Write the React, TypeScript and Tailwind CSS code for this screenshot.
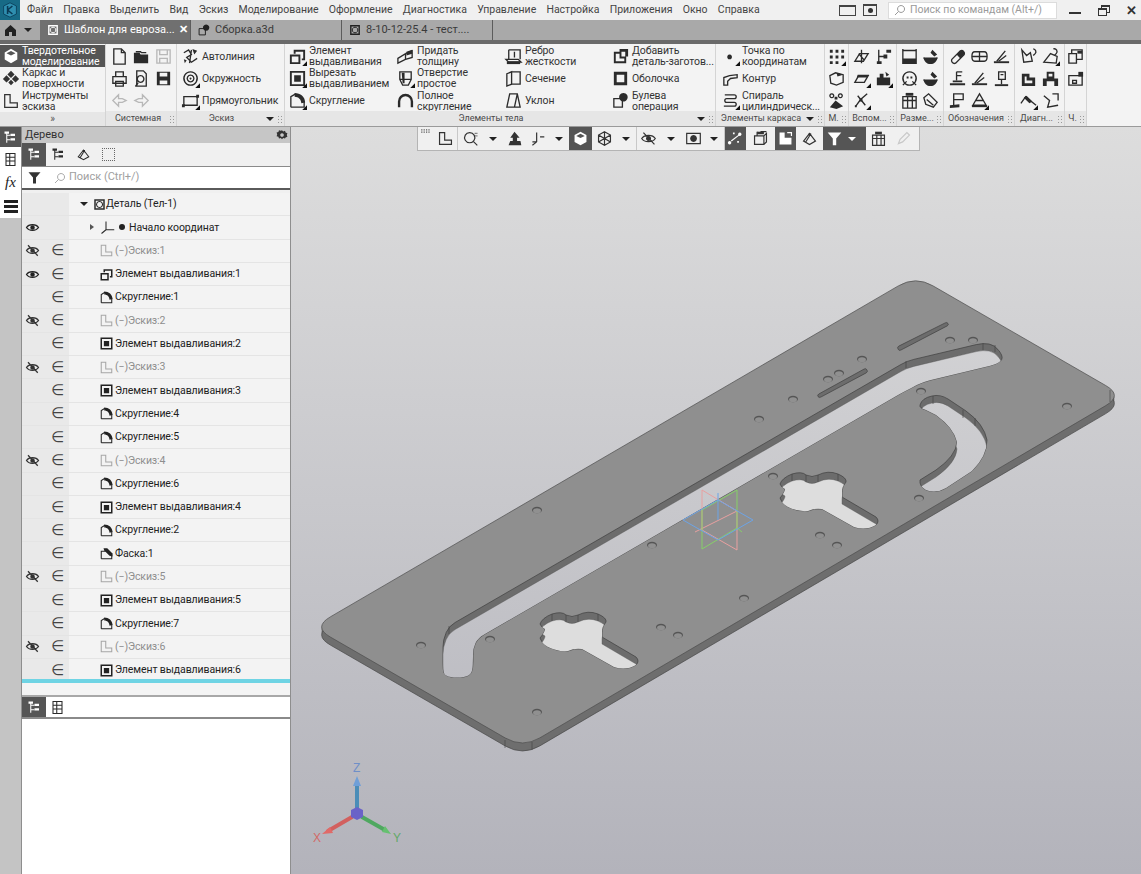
import React from 'react';

type P = [number, number];

// line-and-curve outline with softened corners, used for the plate and long slots
const rounded = (pts: P[], r: number) => {
  const n = pts.length;
  let d = '';
  pts.forEach((p, i) => {
    const a = pts[(i - 1 + n) % n];
    const b = pts[(i + 1) % n];
    const la = Math.hypot(a[0] - p[0], a[1] - p[1]);
    const lb = Math.hypot(b[0] - p[0], b[1] - p[1]);
    const ra = Math.min(r, la / 2) / la;
    const rb = Math.min(r, lb / 2) / lb;
    const s: P = [p[0] + (a[0] - p[0]) * ra, p[1] + (a[1] - p[1]) * ra];
    const e: P = [p[0] + (b[0] - p[0]) * rb, p[1] + (b[1] - p[1]) * rb];
    d += `${i === 0 ? 'M' : 'L'}${s[0].toFixed(1)} ${s[1].toFixed(1)}Q${p[0]} ${p[1]} ${e[0].toFixed(1)} ${e[1].toFixed(1)}`;
  });
  return d + 'Z';
};

const plate = rounded([[313, 627], [915.6, 275.8], [1123, 395.5], [522.6, 748]], 20);

const key = 'M0 2Q2-4 12-8Q22-11 26-7Q32-4 38-7Q48-12 58-8Q67-4 66 0Q62 4 62 10L62 15L96 35Q100 39 96 43Q86 49 74 45L42 27Q34 26 28 29Q18 30 8 25Q1 21 0 16Q5 10 5 7Q1 5 0 2Z';

const holes: { d: string; t?: string }[] = [
  { d: rounded([[443, 640], [449, 626], [907, 361], [983, 343], [995, 345], [1004, 358], [997, 364], [923, 382], [905, 391], [478, 638], [473, 648], [473, 668], [470, 676], [457, 678], [445, 676], [443, 670]], 7) },
  { d: key, t: 'translate(540 622)' },
  { d: key, t: 'translate(780 482)' },
  { d: 'M920 405Q922 398 932 396Q940 394 948 399L966 411Q984 424 987 440Q987 456 972 471L946 488Q936 494 926 490Q919 486 920 480L936 470Q956 456 957 442Q954 428 936 415L926 410Q919 408 920 405Z' },
  { d: rounded([[897, 347], [947, 322], [949, 325], [899, 351]], 2) },
  { d: rounded([[817, 395], [866, 368], [868, 372], [819, 398]], 2) },
];

const dots: P[] = [[950, 340], [973, 340], [862, 359], [828, 379], [839, 373], [793, 399], [759, 419], [921, 391], [1067, 406], [773, 476], [919, 498], [820, 535], [837, 545], [652, 545], [421, 645], [490, 639], [537, 712], [661, 627], [678, 635], [744, 598], [537, 510]];

const Scene = () => (
  <svg className="block w-[850px] h-[747px]" viewBox="291 127 850 747">
    <defs>
      <linearGradient id="bgg" gradientUnits="userSpaceOnUse" x1="0" y1="127" x2="0" y2="874">
        <stop offset="0" stopColor="#dddddd" />
        <stop offset="1" stopColor="#b3b3bb" />
      </linearGradient>
      {holes.map((h, i) => (
        <clipPath id={`hc${i}`} key={i}><path d={h.d} transform={h.t} /></clipPath>
      ))}
    </defs>
    {[2, 4, 6, 8].map((y) => (
      <path key={y} d={plate} transform={`translate(0 ${y})`} fill="#6e6e6e" />
    ))}
    <path d={plate} transform="translate(0 8)" fill="none" stroke="#484848" strokeWidth="0.7" />
    <path d={plate} fill="#8f8f8f" stroke="#4c4c4c" strokeWidth="0.7" />
    {holes.map((h, i) => (
      <g key={i}>
        <path d={h.d} transform={h.t} fill="#6c6c6c" stroke="#3f3f3f" strokeWidth="0.7" />
        <g clipPath={`url(#hc${i})`}>
          <g transform="translate(0 7)">
            <path d={h.d} transform={h.t} fill="url(#bgg)" stroke="#555" strokeWidth="0.4" />
          </g>
        </g>
      </g>
    ))}
    <g stroke="#3f3f3f" strokeWidth="0.6">
      <path d="M906 361v7M983 343v7M995 345v7M449 626v8M552 614v7M566 615v7M578 615v7M598 614v7M792 474v7M806 475v7M818 475v7M838 474v7M933 396v8M963 410v8M975 418v8" />
      <path d="M505 740v8M532 742v8M1110 390v12" />
    </g>
    {dots.map(([x, y], i) => (
      <g key={i}>
        <ellipse cx={x} cy={y} rx="5" ry="3.3" fill="#555" />
        <ellipse cx={x} cy={y + 0.8} rx="4" ry="2.5" fill="#909090" />
      </g>
    ))}
    <g fill="none" strokeWidth="1">
      <path d="M702 490L737 511V550L702 530ZM695 532L737 511" stroke="#e8a0a0" />
      <path d="M737 490L702 510V549L737 528ZM737 528L742 532" stroke="#86d068" />
      <path d="M683 520L718 500L753 520L718 540ZM718 493V520" stroke="#6da4e6" />
    </g>
    <g strokeLinecap="round">
      <path d="M357 812V785" stroke="#4b8db8" strokeWidth="4" />
      <path d="M357 776l-4 10h8z" fill="#6f9fd8" />
      <path d="M352 817L328 831" stroke="#d2605f" strokeWidth="4" />
      <path d="M322 834l8-7 3 6z" fill="#e06a68" />
      <path d="M362 817L385 830" stroke="#4fa860" strokeWidth="4" />
      <path d="M391 834l-9-2 3-6z" fill="#66c070" />
      <path d="M351 810l6-3 6 3v7l-6 3-6-3z" fill="#6a62c8" />
    </g>
    <g fontFamily="'Liberation Sans',sans-serif" fontSize="12">
      <text x="353" y="772" fill="#6f8fc8">Z</text>
      <text x="313" y="842" fill="#d26a68">X</text>
      <text x="393" y="842" fill="#62a868">Y</text>
    </g>
  </svg>
);

const G: Record<string, { s?: string; f?: string }> = {
  doc: { s: 'M4 2h8l4 4v12H4zM12 2v4h4' },
  folder: { f: 'M2 6h6l1 2h8v9H2z', s: 'M4 5h5l1 1h5' },
  saveg: { s: 'M3 3h14v14H3zM6 3v5h8V3M6 17v-5h8v5' },
  print: { s: 'M3 8h14v7H3zM6 8V3h8v5M6 13h8v5H6z' },
  preview: { s: 'M5 2h7l3 3v13H5zM9 7a3.5 3.5 0 1 0 .1 0z', f: 'M6 14l-3 4 1 1 3-4z' },
  save: { f: 'M3 3h14v14H3zM6 4v4h8V4zM6 12v4h8v-4z' },
  undo: { s: 'M9 4L3 10l6 6v-4h4l4-2-4-2H9z' },
  redo: { s: 'M11 4l6 6-6 6v-4H7l-4-2 4-2h4z' },
  auto: { s: 'M3 6l5-3 3 5-5 3 5 5 6-4M11 3l-2 14', f: 'M12 2l5 2-3 4zM3 13l3 1-2 3z' },
  circle: { s: 'M10 3a7 7 0 1 0 .1 0zM10 6.5a3.5 3.5 0 1 0 .1 0z', f: 'M10 9a1 1 0 1 0 .1 0z' },
  rect: { s: 'M3 6h14v9H3z', f: 'M1 14h3v3H1zM16 4h3v3h-3z' },
  extrude: { f: 'M2 8h11v10H2zM4 10v6h7v-6zM6 3h12v11h-3.5v-2H16V5H8v2H6z' },
  cut: { f: 'M2 2h16v16H2zM4 4v12h12V4zM6.5 6.5h7v7h-7z' },
  fillet: { s: 'M3 17V6l5-3M3 17h14v-6', f: 'M7 2c6 0 11 4 11 10l-4 1c0-4-3-7-7-7z' },
  thick: { s: 'M2 12l8-5v6l-8 4zM10 7l7-3v7l-7 2', f: 'M11 5l6-2v4l-6 2z' },
  hole: { s: 'M4 3h12v8l-3 6H7l-3-6zM4 11h12', f: 'M6 4h3v11H7z' },
  ffillet: { f: 'M2 17V11a8 8 0 0 1 16 0v6h-2.5v-6a5.5 5.5 0 0 0-11 0v6z' },
  rib: { s: 'M2 13h13l3 3H5zM5 3h12v10M5 3v10M11 5v6', f: 'M3 15h14v3H3z' },
  section: { s: 'M3 5l5-2v13l-5 2zM8 3h9v13H8' },
  draft: { s: 'M6 3h8l3 14H3zM14 3l-3 14' },
  chamfer: { s: 'M3 17V7h6M3 17h14v-6', f: 'M6 3h5l7 7v4l-4-1-7-7z' },
  add: { f: 'M3 5h8v5h5v7H3zM5 7v8h9v-3H9V7zM9 2h9v8h-3V5H9z' },
  shell: { f: 'M3 3h14v14H3zM6 6v8h8V6z' },
  bool: { s: 'M3 8h9v9H3z', f: 'M13 2a4.5 4.5 0 1 0 .1 0z' },
  point: { f: 'M9 8a2.5 2.5 0 1 0 .1 0z' },
  contour: { s: 'M3 17V9l6-2 8-1v3l-7 1-3 3v4z' },
  spiral: { s: 'M4 4h10a2 2 0 0 1 0 4H6a2 2 0 0 0 0 4h8a2 2 0 0 1 0 4H3' },
  gdots: { f: 'M3 3h3v3H3zM9 3h3v3H9zM15 3h3v3h-3zM3 9h3v3H3zM9 9h3v3H9zM15 9h3v3h-3zM3 15h3v3H3zM9 15h3v3H9z' },
  diamond: { f: 'M10 2l4 4-4 4-4-4zM5 7l4 4-4 4-4-4zM15 7l4 4-4 4-4-4zM10 12l3 3-3 3-3-3z' },
  blob: { s: 'M3 7l6-3 8 2v8l-7 3-6-2z', f: 'M10 4l7 2-6 2z' },
  person: { f: 'M3 17l6-7 8 6-7 3zM8 6h3v3H8z', s: 'M5 3a2 2 0 1 0 .1 0zM14 3a2 2 0 1 0 .1 0z' },
  plane: { s: 'M3 14L7 7h10l-4 7z', f: 'M6 6h12L16 9H5z' },
  cross: { s: 'M3 15l5-8h9l-5 8zM10 3v14M7 7l6 7' },
  node: { s: 'M4 16l5-7 7-6M6 5l8 10', f: 'M8 8h3v3H8zM3 15h2v2H3z' },
  flag: { s: 'M5 3v14M5 10h7', f: 'M13 3h5v3h-5zM3 15h5v3H3zM10 8h4v4h-4z' },
  cam: { f: 'M3 9h14v8H3zM6 5h4v4H6zM12 3l4 3-3 2z' },
  frame: { s: 'M3 2v16M17 2v16', f: 'M3 12h14v6H3zM3 3h14v1.5H3z' },
  bowl: { s: 'M3 11a7 3 0 0 0 14 0', f: 'M3 11h14c0 4-3 7-7 7s-7-3-7-7zM12 3l5 5-3 2-4-4z' },
  face: { s: 'M10 3a7 7 0 1 0 .1 0zM3 17l4-4M17 17l-4-4', f: 'M7 8h2v2H7zM11 8h2v2h-2z' },
  tbl: { s: 'M3 6h14v12H3zM3 10h14M8 6v12M13 6v12', f: 'M6 2h8v3H6z' },
  rot: { s: 'M3 7l5-4 9 9-4 5-8-3zM6 9l7 6' },
  pill: { s: 'M4 13L13 4a3 3 0 0 1 4 4l-9 9a3 3 0 0 1-4-4z', f: 'M9 8l4-4a3 3 0 0 1 4 4l-4 4z' },
  barrel: { s: 'M5 5h10a3 5 0 0 1 0 10H5a3 5 0 0 1 0-10zM2 10h16M10 5v10' },
  mark: { f: 'M2 15h16v2H2z', s: 'M5 15l9-11M7 15l8-6' },
  markE: { f: 'M2 15h16v2H2zM5 12h10v2H5z', s: 'M9 3v9M9 3h6M9 7h5' },
  markB: { f: 'M3 16h14v2H3z', s: 'M7 3h7v8H7zM10 11v5M9 6h3' },
  markF: { f: 'M2 15l10-1v3l-10 1z', s: 'M6 3h10v6H6zM6 3v12' },
  tri: { s: 'M10 3l7 12H3zM6 10h8', f: 'M2 15h16v2H2z' },
  diagA: { s: 'M3 3l5 6 4-3 2 9-9 1zM15 2a3 3 0 0 1 2 5l-2 2' },
  diagB: { s: 'M3 16l7-9 7 3-1 7zM13 2a3 3 0 0 1 3 5l-2 2' },
  cube2: { f: 'M3 5h8v4h6v9H3zM6 8v7h8v-3H8V8z' },
  chain: { f: 'M6 3h8v7h4v8h-4v-5H6v5H2v-8h4zM8 5v3h4V5z' },
  wave: { s: 'M2 13l5-7 6 5 5 4', f: 'M5 7l3-2 6 6-3 2z' },
  q: { s: 'M3 5l6 5-2 7 11-2M12 3h6v7' },
  assy: { s: 'M3 7h8v10H3zM6 7V3h11v10h-6', f: 'M12 4h5v3h-5z' },
  assy2: { s: 'M3 7h14v10H3zM7 12h4v3H7z', f: 'M13 3h5v5h-5z' },
  sketch: { s: 'M3 3v14h14v-5H9V3z' },
  tree: { s: 'M5 3v14M5 7h5M5 13h5', f: 'M2 2h6v3H2zM10 5h6v3h-6zM10 11h6v3h-6z' },
  eye: { s: 'M2 10c3-5 13-5 16 0-3 5-13 5-16 0z', f: 'M10 7a3 3 0 1 0 .1 0z' },
  noeye: { s: 'M2 10c3-5 13-5 16 0-3 5-13 5-16 0zM4 3l13 14', f: 'M10 7a3 3 0 1 0 .1 0z' },
  axes: { s: 'M8 2v11M8 13h11M8 13l-6 5' },
  part: { f: 'M3 3h14v14H3zM5 5v10h10V5z', s: 'M10 6a4 4 0 1 0 .1 0z' },
  filter: { f: 'M2 3h16l-6 7v8h-4v-8z' },
  gear: { f: 'M10 2l2 2 3-1 1 3 3 1-1 3 1 3-3 1-1 2-3-1-2 2-2-2-3 1-1-3-3-1 1-3-1-3 3-1 1-3 3 1zM10 7a3 3 0 1 0 .1 0z' },
  zoom: { s: 'M9 3a6 6 0 1 0 .1 0zM13 13l5 5M15 4h1M17 4h1M15 7h1M17 7h1' },
  up: { f: 'M10 2l6 7h-3v4h4l1 5H3l2-5h3V9H5z' },
  ax: { s: 'M9 3v11M9 14H4M9 14l-5 4M13 8h5' },
  solid: { f: 'M10 2l7 4v8l-7 4-7-4V6zM10 4.5L5 7l5 2.5L15 7z' },
  wire: { s: 'M10 2l7 4v8l-7 4-7-4V6zM3 6l7 4 7-4M10 10v8M3 14l7-4 7 4M10 2v8' },
  camera: { s: 'M2 4h16v12H2z', f: 'M10 6a4 4 0 1 0 .1 0z' },
  nodes: { f: 'M3 13a2 2 0 1 0 .1 0zM15 3a2 2 0 1 0 .1 0zM7 3h2v2H7zM12 13h2v2h-2z', s: 'M5 13l9-7' },
  box: { s: 'M3 7h11v10H3zM14 7l3-3v10l-3 3M6 2v5M10 2h7', f: 'M6 2h8v3H6z' },
  shade: { f: 'M3 3h6v6h8v8H3z', s: 'M12 3h5v4' },
  layers: { s: 'M3 13l7-9 7 9-7 4zM5 15l5-8', f: 'M9 4h3v3H9z' },
  pen: { s: 'M4 16l2-5 8-8 3 3-8 8z' },
  grip: { f: 'M2 2h2v2H2zM6 2h2v2H6zM10 2h2v2h-2zM14 2h2v2h-2zM2 6h2v2H2zM6 6h2v2H6zM10 6h2v2h-2zM14 6h2v2h-2z' },
  panels: { s: 'M4 2h12v16H4zM4 7h12M4 12h12M9 2v16' },
};

const Ico = ({ n, s = 19, c = '#2b2b2b', tri = false, w = 1.4 }: { n: string; s?: number; c?: string; tri?: boolean; w?: number }) => {
  const g = G[n] ?? {};
  return (
    <svg width={s} height={s} viewBox="0 0 20 20" className="shrink-0 block">
      {g.s && <path d={g.s} fill="none" stroke={c} strokeWidth={w} />}
      {g.f && <path d={g.f} fill={c} fillRule="evenodd" />}
      {tri && <path d="M20 15v5h-5z" fill="#111" />}
    </svg>
  );
};

const Drop = ({ light }: { light?: boolean }) => (
  <span className={`inline-block w-0 h-0 border-x-[4px] border-x-transparent border-t-[4px] ${light ? 'border-t-white' : 'border-t-[#222]'}`} />
);

const menu = ['Файл', 'Правка', 'Выделить', 'Вид', 'Эскиз', 'Моделирование', 'Оформление', 'Диагностика', 'Управление', 'Настройка', 'Приложения', 'Окно', 'Справка'];

const MenuBar = () => (
  <div className="flex items-center h-[20px] bg-[#f0f0f0] text-[#444] text-[10.5px]">
    <div className="w-[20px] h-[20px] bg-[#176a86] flex items-center justify-center">
      <svg width="16" height="16" viewBox="0 0 20 20">
        <path d="M10 1l8 4v10l-8 4-8-4V5z" fill="#2f8fb0" stroke="#0a3a55" />
        <path d="M7 5v10M7 10l6-5M7 10l6 5" stroke="#0a3a55" strokeWidth="2" fill="none" />
      </svg>
    </div>
    <div className="flex gap-[10.2px] ml-[7px]">
      {menu.map((m) => <span key={m}>{m}</span>)}
    </div>
    <div className="ml-auto flex items-center">
      <div className="w-[17px] h-[11px] border border-[#444] border-t-2" />
      <div className="ml-[7px] w-[14px] h-[12px] border border-[#444] border-t-2 flex items-center justify-center">
        <div className="w-[5px] h-[5px] rounded-full bg-[#333]" />
      </div>
      <div className="ml-[11px] w-[169px] h-[17px] bg-white border border-[#dcdcdc] flex items-center pl-[5px] gap-[4px] text-[#9a9a9a]">
        <svg width="12" height="12" viewBox="0 0 12 12"><path d="M7 1.5a3.5 3.5 0 1 0 .1 0zM4.5 7.5L1 11" fill="none" stroke="#999" /></svg>
        <span className="text-[10.5px]">Поиск по командам (Alt+/)</span>
      </div>
      <div className="ml-[12px] w-[12px] h-[2px] bg-[#333] mt-[5px]" />
      <div className="ml-[17px] relative w-[12px] h-[11px]">
        <div className="absolute right-0 top-0 w-[9px] h-[8px] border border-[#333] border-t-2" />
        <div className="absolute left-0 bottom-0 w-[9px] h-[8px] border border-[#333] border-t-2 bg-[#f0f0f0]" />
      </div>
      <span className="ml-[16px] mr-[5px] w-[10px] text-[13px] font-bold text-[#333] leading-none">✕</span>
    </div>
  </div>
);

const Tab = ({ text, icon, active }: { text: string; icon: string; active?: boolean }) => (
  <div className={`w-[151px] h-full flex items-center pl-[6px] gap-[4px] border-r border-[#5c5c5c] whitespace-nowrap ${active ? 'bg-[#707070] text-white' : 'text-[#3a3a3a]'}`}>
    <Ico n={icon} s={14} c={active ? '#fff' : '#222'} />
    <span className="text-[11px] flex-1">{text}</span>
    {active && <span className="mr-[7px] text-[11px] font-bold">✕</span>}
  </div>
);

const TabBar = () => (
  <div className="h-[24px] border-b-[4px] border-[#6a6a6a] bg-[#a9a9a9] flex">
    <div className="w-[40px] flex items-center pl-[4px] gap-[7px]">
      <svg width="13" height="13" viewBox="0 0 13 13"><path d="M6.5 1L12 6v6H8V8H5v4H1V6z" fill="#222" /></svg>
      <Drop />
    </div>
    <Tab text="Шаблон для евроза..." icon="part" active />
    <Tab text="Сборка.a3d" icon="bool" />
    <Tab text="8-10-12-25.4 - тест...." icon="part" />
  </div>
);

const Foot = ({ t, arrow }: { t: string; arrow?: boolean }) => (
  <div className="h-[15px] bg-[#e6e6e6] flex items-center px-[2px] text-[9px] text-[#4a4a4a]">
    <span className="flex-1 whitespace-nowrap text-center">{t}</span>
    {arrow && <span className="mx-[2px] flex"><Drop /></span>}
    <span className="w-[5px] h-[8px] ml-[1px] shrink-0 bg-[radial-gradient(#999_1px,transparent_1px)] bg-[length:3px_3px]" />
  </div>
);

const Sec = ({ w, foot, arrow, children }: { w: string; foot: string; arrow?: boolean; children: React.ReactNode }) => (
  <div className={`flex flex-col border-r border-[#d4d4d4] shrink-0 ${w}`}>
    <div className="flex-1 min-h-0 pt-[1px]">{children}</div>
    <Foot t={foot} arrow={arrow} />
  </div>
);

const Cmd = ({ n, l1, l2, tri }: { n: string; l1: string; l2?: string; tri?: boolean }) => (
  <div className="h-[22.3px] flex items-center gap-[2px] text-[#333] text-[10.5px] tracking-[-0.1px] leading-[11px] whitespace-nowrap">
    <Ico n={n} tri={tri} />
    <div>
      <div>{l1}</div>
      {l2 && <div>{l2}</div>}
    </div>
  </div>
);

const Mode = ({ n, l1, l2, on }: { n: string; l1: string; l2: string; on?: boolean }) => (
  <div className={`h-[22.3px] flex items-center gap-[2px] pl-[2px] text-[10.5px] tracking-[-0.1px] leading-[11px] ${on ? 'bg-[#555555] text-white' : 'text-[#333]'}`}>
    <Ico n={n} s={18} c={on ? '#fff' : '#333'} />
    <div><div>{l1}</div><div>{l2}</div></div>
  </div>
);

const IconGrid = ({ cols, items }: { cols: string; items: (string | null)[] }) => (
  <div className={`grid justify-items-center items-center auto-rows-[22.3px] px-[2px] ${cols}`}>
    {items.map((k, i) => {
      if (!k) return <span key={i} />;
      const tri = k.endsWith('^');
      const name = tri ? k.slice(0, -1) : k;
      const gray = name === 'undo' || name === 'redo' || name === 'saveg';
      return <Ico key={i} n={name} tri={tri} c={gray ? '#b8b8b8' : '#2b2b2b'} />;
    })}
  </div>
);

const Ribbon = () => (
  <div className="h-[83px] bg-[#f3f3f3] flex border-b border-[#9a9a9a]">
    <div className="w-[106px] flex flex-col border-r border-[#d4d4d4] shrink-0">
      <div className="flex-1 pt-[1px]">
        <Mode n="solid" l1="Твердотельное" l2="моделирование" on />
        <Mode n="diamond" l1="Каркас и" l2="поверхности" />
        <Mode n="sketch" l1="Инструменты" l2="эскиза" />
      </div>
      <div className="h-[15px] bg-[#e6e6e6] text-center text-[10px] leading-[13px] text-[#555]">»</div>
    </div>
    <Sec w="w-[71px]" foot="Системная">
      <IconGrid cols="grid-cols-3" items={['doc', 'folder', 'saveg', 'print', 'preview', 'save', 'undo', 'redo', null]} />
    </Sec>
    <Sec w="w-[108px]" foot="Эскиз" arrow>
      <div className="pl-[4px]">
        <Cmd n="auto" l1="Автолиния" />
        <Cmd n="circle" l1="Окружность" tri />
        <Cmd n="rect" l1="Прямоугольник" tri />
      </div>
    </Sec>
    <Sec w="w-[431px]" foot="Элементы тела" arrow>
      <div className="grid grid-cols-[108px_108px_107px_1fr] pl-[3px]">
        <div>
          <Cmd n="extrude" l1="Элемент" l2="выдавливания" tri />
          <Cmd n="cut" l1="Вырезать" l2="выдавливанием" tri />
          <Cmd n="fillet" l1="Скругление" tri />
        </div>
        <div>
          <Cmd n="thick" l1="Придать" l2="толщину" />
          <Cmd n="hole" l1="Отверстие" l2="простое" tri />
          <Cmd n="ffillet" l1="Полное" l2="скругление" />
        </div>
        <div>
          <Cmd n="rib" l1="Ребро" l2="жесткости" />
          <Cmd n="section" l1="Сечение" />
          <Cmd n="draft" l1="Уклон" />
        </div>
        <div>
          <Cmd n="add" l1="Добавить" l2="деталь-заготов..." />
          <Cmd n="shell" l1="Оболочка" />
          <Cmd n="bool" l1="Булева" l2="операция" />
        </div>
      </div>
    </Sec>
    <Sec w="w-[109px]" foot="Элементы каркаса" arrow>
      <div className="pl-[5px]">
        <Cmd n="point" l1="Точка по" l2="координатам" tri />
        <Cmd n="contour" l1="Контур" />
        <Cmd n="spiral" l1="Спираль" l2="цилиндрическ..." tri />
      </div>
    </Sec>
    <Sec w="w-[24px]" foot="М.">
      <IconGrid cols="grid-cols-1" items={['gdots^', 'blob', 'person']} />
    </Sec>
    <Sec w="w-[48px]" foot="Вспом...">
      <IconGrid cols="grid-cols-2" items={['cross', 'flag', 'plane^', 'cam^', 'node^', null]} />
    </Sec>
    <Sec w="w-[47px]" foot="Разме...">
      <IconGrid cols="grid-cols-2" items={['frame', 'bowl', 'face', 'bowl', 'tbl', 'rot']} />
    </Sec>
    <Sec w="w-[71px]" foot="Обозначения">
      <IconGrid cols="grid-cols-3" items={['pill', 'barrel', 'mark', 'markE', 'mark', 'markB', 'markF', 'tri^', null]} />
    </Sec>
    <Sec w="w-[50px]" foot="Диагн...">
      <IconGrid cols="grid-cols-2" items={['diagA', 'diagB^', 'cube2', 'chain', 'wave^', 'q']} />
    </Sec>
    <Sec w="w-[22px]" foot="Ч.">
      <IconGrid cols="grid-cols-1" items={['assy', 'assy2', null]} />
    </Sec>
  </div>
);

const Sep = () => <div className="w-px h-[23px] bg-[#c8c8c8] shrink-0" />;

const Tb = ({ n, w, on, c }: { n: string; w: string; on?: boolean; c?: string }) => (
  <div className={`h-[23px] shrink-0 flex items-center justify-center ${w} ${on ? 'bg-[#555]' : ''}`}>
    <Ico n={n} s={17} c={c ?? (on ? '#fff' : '#333')} />
  </div>
);

const TbDrop = ({ w }: { w: string }) => <span className={`shrink-0 flex justify-center ${w}`}><Drop /></span>;

const FloatBar = () => (
  <div className="absolute left-[126px] top-0 w-[503px] h-[24px] bg-[#f0f0f0] border border-[#b4b4b4] border-t-0 flex items-center">
    <div className="w-[16px] h-[23px] shrink-0 flex justify-center pt-[1px]"><Ico n="grip" s={12} c="#555" /></div>
    <Tb n="sketch" w="w-[23px]" />
    <Sep />
    <Tb n="zoom" w="w-[25px]" />
    <TbDrop w="w-[20px]" />
    <Tb n="up" w="w-[23px]" />
    <Tb n="ax" w="w-[22px]" />
    <TbDrop w="w-[21px]" />
    <Tb n="solid" w="w-[23px]" on />
    <Tb n="wire" w="w-[24px]" />
    <TbDrop w="w-[20px]" />
    <Sep />
    <Tb n="noeye" w="w-[23px]" />
    <TbDrop w="w-[22px]" />
    <Tb n="camera" w="w-[22px]" />
    <TbDrop w="w-[20px]" />
    <Sep />
    <Tb n="nodes" w="w-[21px]" on />
    <Tb n="box" w="w-[29px]" />
    <Tb n="shade" w="w-[21px]" on />
    <Tb n="layers" w="w-[27px]" />
    <div className="w-[43px] shrink-0 flex items-center h-[23px] bg-[#555] pl-[3px] gap-[5px]">
      <Ico n="filter" s={17} c="#fff" />
      <Drop light />
    </div>
    <Tb n="tbl" w="w-[24px]" />
    <Tb n="pen" w="w-[26px]" c="#c8c8c8" />
  </div>
);

type Row = { t: string; n: string; eye?: 0 | 1; on?: boolean; dim?: boolean };

const E = (i: number): Row => ({ t: `Элемент выдавливания:${i}`, n: 'cut', on: true });
const S = (i: number): Row => ({ t: `Скругление:${i}`, n: 'fillet', on: true });
const K = (i: number): Row => ({ t: `Эскиз:${i}`, n: 'sketch', eye: 0, on: true, dim: true });

const rows: Row[] = [
  K(1), { t: 'Элемент выдавливания:1', n: 'extrude', eye: 1, on: true }, S(1), K(2), E(2), K(3), E(3), S(4), S(5), K(4), S(6), E(4), S(2),
  { t: 'Фаска:1', n: 'chamfer', on: true }, K(5), E(5), S(7), K(6), E(6),
];

const RowShell = ({ children, eye, on }: { children: React.ReactNode; eye?: 0 | 1; on?: boolean }) => (
  <div className="h-[23.3px] flex border-b border-[#e4e4e4] bg-[#f3f3f3]">
    <div className="w-[47px] bg-[#e9e9e9] flex items-center shrink-0">
      <span className="w-[24px] pl-[3px]">
        {eye === 1 && <Ico n="eye" s={15} c="#222" w={1.7} />}
        {eye === 0 && <Ico n="noeye" s={15} c="#333" w={1.7} />}
      </span>
      {on && <span className="ml-[5px] text-[15px] leading-none text-[#444] font-['DejaVu_Sans',sans-serif]">∈</span>}
    </div>
    {children}
  </div>
);

const Tree = () => (
  <div className="text-[10.5px] tracking-[-0.1px] text-[#222]">
    <RowShell>
      <div className="flex items-center pl-[11px] gap-[4px]">
        <span className="flex"><Drop /></span>
        <Ico n="part" s={15} />
        <span className="-ml-[5px]">Деталь (Тел-1)</span>
      </div>
    </RowShell>
    <RowShell eye={1}>
      <div className="flex items-center pl-[21px]">
        <span className="w-0 h-0 border-y-[3px] border-y-transparent border-l-[4px] border-l-[#555]" />
        <span className="ml-[6px]"><Ico n="axes" s={15} /></span>
        <span className="ml-[4px] w-[6px] h-[6px] rounded-full bg-[#222]" />
        <span className="ml-[4px]">Начало координат</span>
      </div>
    </RowShell>
    {rows.map((r) => (
      <RowShell key={r.t} eye={r.eye} on={r.on}>
        <div className={`flex items-center pl-[30px] ${r.dim ? 'text-[#8e8e8e]' : ''}`}>
          <Ico n={r.n} s={15} c={r.dim ? '#a6a6a6' : '#222'} />
          <span className="ml-[1px]">{r.dim ? `(−)${r.t}` : r.t}</span>
        </div>
      </RowShell>
    ))}
  </div>
);

const Panel = () => (
  <div className="w-[269px] flex flex-col shrink-0 bg-white border-r border-[#8e8e8e]">
    <div className="h-[16px] bg-[#c6c6c6] flex items-center justify-between pl-[3px] pr-[2px] text-[11px] text-[#333]">
      <span>Дерево</span>
      <Ico n="gear" s={12} c="#333" />
    </div>
    <div className="h-[24px] bg-[#f0f0f0] flex items-center border-b border-[#8a8a8a]">
      <div className="w-[24px] h-full bg-[#555] flex items-center justify-center"><Ico n="tree" s={15} c="#fff" /></div>
      <div className="w-[25px] flex justify-center"><Ico n="tree" s={15} /></div>
      <div className="w-[25px] flex justify-center"><Ico n="layers" s={15} /></div>
      <div className="w-[25px] flex justify-center"><div className="w-[13px] h-[13px] border border-dotted border-[#666]" /></div>
    </div>
    <div className="h-[23px] bg-white flex items-center border-b-2 border-[#5a5a5a] text-[11px] text-[#a0a0a0]">
      <div className="w-[24px] flex justify-center"><Ico n="filter" s={15} c="#333" /></div>
      <svg className="ml-[8px]" width="12" height="12" viewBox="0 0 12 12"><path d="M7 1.5a3.5 3.5 0 1 0 .1 0zM4.5 7.5L1 11" fill="none" stroke="#aaa" /></svg>
      <span className="ml-[3px]">Поиск (Ctrl+/)</span>
    </div>
    <div className="h-[3px] bg-[#f0f0f0]" />
    <Tree />
    <div className="h-[4px] -mt-[3px] bg-[#6fd4e4]" />
    <div className="h-[14px] bg-[#f4f4f4] border-b-2 border-[#a8a8a8]" />
    <div className="h-[22px] bg-white flex items-center border-b-2 border-[#8a8a8a]">
      <div className="w-[24px] h-full bg-[#555] flex items-center justify-center"><Ico n="tree" s={15} c="#fff" /></div>
      <div className="w-[22px] flex justify-center"><Ico n="panels" s={15} /></div>
    </div>
    <div className="flex-1 bg-white" />
  </div>
);

const Rail = () => (
  <div className="w-[22px] shrink-0 bg-[#c4c4c4] border-r border-[#8e8e8e]">
    <div className="bg-white h-[91px]">
      <div className="h-[20px] bg-[#555] flex items-center justify-center"><Ico n="tree" s={15} c="#fff" /></div>
      <div className="h-[24px] flex items-center justify-center"><Ico n="panels" s={15} /></div>
      <div className="h-[23px] flex items-center justify-center font-['Liberation_Serif',serif] italic text-[15px] text-[#222]">fx</div>
      <div className="h-[24px] flex flex-col items-center justify-center gap-[2px]">
        <div className="w-[14px] h-[3px] bg-[#222]" />
        <div className="w-[14px] h-[3px] bg-[#222]" />
        <div className="w-[14px] h-[3px] bg-[#222]" />
      </div>
    </div>
  </div>
);

export default function App() {
  return (
    <div className="w-[1141px] h-[874px] overflow-hidden flex flex-col font-['Roboto',sans-serif]">
      <MenuBar />
      <TabBar />
      <Ribbon />
      <div className="flex flex-1 min-h-0">
        <Rail />
        <Panel />
        <div className="relative flex-1 bg-[linear-gradient(180deg,#dddddd,#b3b3bb)]">
          <Scene />
          <FloatBar />
        </div>
      </div>
    </div>
  );
}
